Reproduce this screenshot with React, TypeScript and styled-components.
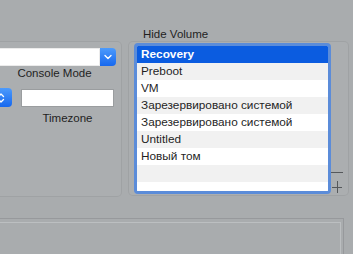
import styled, {createGlobalStyle} from 'styled-components'

const GlobalStyle = createGlobalStyle`
  html, body {
    margin: 0;
    padding: 0;
    background: #a9acae;
    overflow: hidden;
  }
  body {
    font-family: 'Liberation Sans', Helvetica, Arial, sans-serif;
    font-size: 11.5px;
    color: #1f1f1f;
  }
`

const Page = styled.div`
  width: 353px;
  height: 254px;
  overflow: hidden;
  padding-top: 27px;
  box-sizing: border-box;
`

const Row = styled.div`
  display: flex;
  align-items: flex-start;
  gap: 6px;
  margin-left: -20px;
`

const LeftCol = styled.div`
  width: 142px;
  padding-top: 14px;
  flex-shrink: 0;
`

const GroupBox = styled.div<{$h: number}>`
  box-sizing: border-box;
  height: ${({$h}) => $h}px;
  border: 1px solid rgba(0, 0, 0, 0.07);
  border-radius: 5px;
  background: rgba(255, 255, 255, 0.03);
`

const LeftPanel = styled(GroupBox)`
  padding: 6px 5px 0 12px;
`

const PopupRow = styled.div`
  display: flex;
  height: 18px;
`

const PopupField = styled.div`
  flex: 1;
  background: #fff;
  box-shadow: inset 0 0 0 1px rgba(0, 0, 0, 0.08);
`

const BlueButton = styled.div<{$w: number; $radius: string}>`
  width: ${({$w}) => $w}px;
  display: flex;
  align-items: center;
  justify-content: center;
  background: linear-gradient(#4d9bfc, #1668ef);
  border-radius: ${({$radius}) => $radius};
  flex-shrink: 0;
`

const Caption = styled.div<{$mt?: number}>`
  text-align: center;
  line-height: 14px;
  margin-top: ${({$mt}) => $mt ?? 0}px;
`

const TzRow = styled.div`
  display: flex;
  align-items: flex-start;
  margin-top: 8px;
  gap: 9px;
`

const Stepper = styled(BlueButton)`
  height: 19px;
  margin-left: 3px;
  justify-content: flex-start;
  padding-left: 1px;
  box-sizing: border-box;
`

const FieldCol = styled.div`
  width: 93px;
  margin-top: 1px;
`

const TextField = styled.div`
  height: 18px;
  box-sizing: border-box;
  background: #fff;
  border: 1px solid #9a9d9f;
`

const RightCol = styled.div`
  width: 221px;
  flex-shrink: 0;
`

const Label = styled.div`
  line-height: 14px;
  padding-left: 15px;
`

const RightPanel = styled(GroupBox)`
  display: flex;
  padding: 0 0 0 5px;
`

const List = styled.div`
  width: 197px;
  height: 151px;
  margin-top: 1px;
  box-sizing: border-box;
  border: 3px solid #5b8cd9;
  border-radius: 4px;
  background: #fff;
  overflow: hidden;
`

const Item = styled.div<{$selected?: boolean; $alt?: boolean}>`
  height: 17px;
  line-height: 17px;
  font-size: 11.8px;
  padding-left: 4px;
  white-space: nowrap;
  background: ${({$selected, $alt}) => ($selected ? '#0b5ce0' : $alt ? '#f1f1f1' : '#fff')};
  color: ${({$selected}) => ($selected ? '#fff' : '#1f1f1f')};
  font-weight: ${({$selected}) => ($selected ? 700 : 400)};
`

const Tools = styled.div`
  display: flex;
  flex-direction: column;
  gap: 3px;
  align-self: flex-end;
  margin-bottom: 2px;
`

const ToolButton = styled.div`
  width: 12px;
  height: 12px;
  display: flex;
  align-items: center;
  justify-content: center;
`

const BottomBox = styled.div`
  margin-top: 21px;
  margin-left: -10px;
  width: 354px;
  height: 60px;
  box-sizing: border-box;
  border-top: 1px solid #97999c;
  border-right: 1px solid #97999c;
  padding: 3px 2px 0 0;
`

const BottomInner = styled.div`
  height: 100%;
  border-top: 1px solid #bcbfc1;
  border-right: 1px solid #bcbfc1;
`

const volumes = [
  'Recovery',
  'Preboot',
  'VM',
  'Зарезервировано системой',
  'Зарезервировано системой',
  'Untitled',
  'Новый том',
  '',
  '',
]

const ChevronDown = () => (
  <svg width="8" height="6" viewBox="0 0 8 6">
    <path d="M1 1.5 L4 4.5 L7 1.5" fill="none" stroke="#fff" strokeWidth="1.4" strokeLinecap="round" strokeLinejoin="round" />
  </svg>
)

const UpDown = () => (
  <svg width="8" height="12" viewBox="0 0 8 12">
    <path d="M1.5 4.5 L4 2 L6.5 4.5 M1.5 7.5 L4 10 L6.5 7.5" fill="none" stroke="#fff" strokeWidth="1.3" strokeLinecap="round" strokeLinejoin="round" />
  </svg>
)

export default function App() {
  return (
    <>
      <GlobalStyle />
      <Page>
        <Row>
          <LeftCol>
            <LeftPanel $h={156}>
              <PopupRow>
                <PopupField />
                <BlueButton $w={16} $radius="0 4px 4px 0">
                  <ChevronDown />
                </BlueButton>
              </PopupRow>
              <Caption>Console Mode</Caption>
              <TzRow>
                <Stepper $w={16} $radius="0 4px 4px 0">
                  <UpDown />
                </Stepper>
                <FieldCol>
                  <TextField />
                  <Caption $mt={4}>Timezone</Caption>
                </FieldCol>
              </TzRow>
            </LeftPanel>
          </LeftCol>
          <RightCol>
            <Label>Hide Volume</Label>
            <RightPanel $h={155}>
              <List>
                {volumes.map((v, i) => (
                  <Item key={i} $selected={i === 0} $alt={i % 2 === 1}>
                    {v}
                  </Item>
                ))}
              </List>
              <Tools>
                <ToolButton>
                  <svg width="12" height="12" viewBox="0 0 12 12">
                    <path d="M0 6.5 H12" stroke="#55585b" strokeWidth="1" />
                  </svg>
                </ToolButton>
                <ToolButton>
                  <svg width="12" height="12" viewBox="0 0 12 12">
                    <path d="M1 6.5 H11 M6.5 0 V12" stroke="#55585b" strokeWidth="1" />
                  </svg>
                </ToolButton>
              </Tools>
            </RightPanel>
          </RightCol>
        </Row>
        <BottomBox>
          <BottomInner />
        </BottomBox>
      </Page>
    </>
  )
}
